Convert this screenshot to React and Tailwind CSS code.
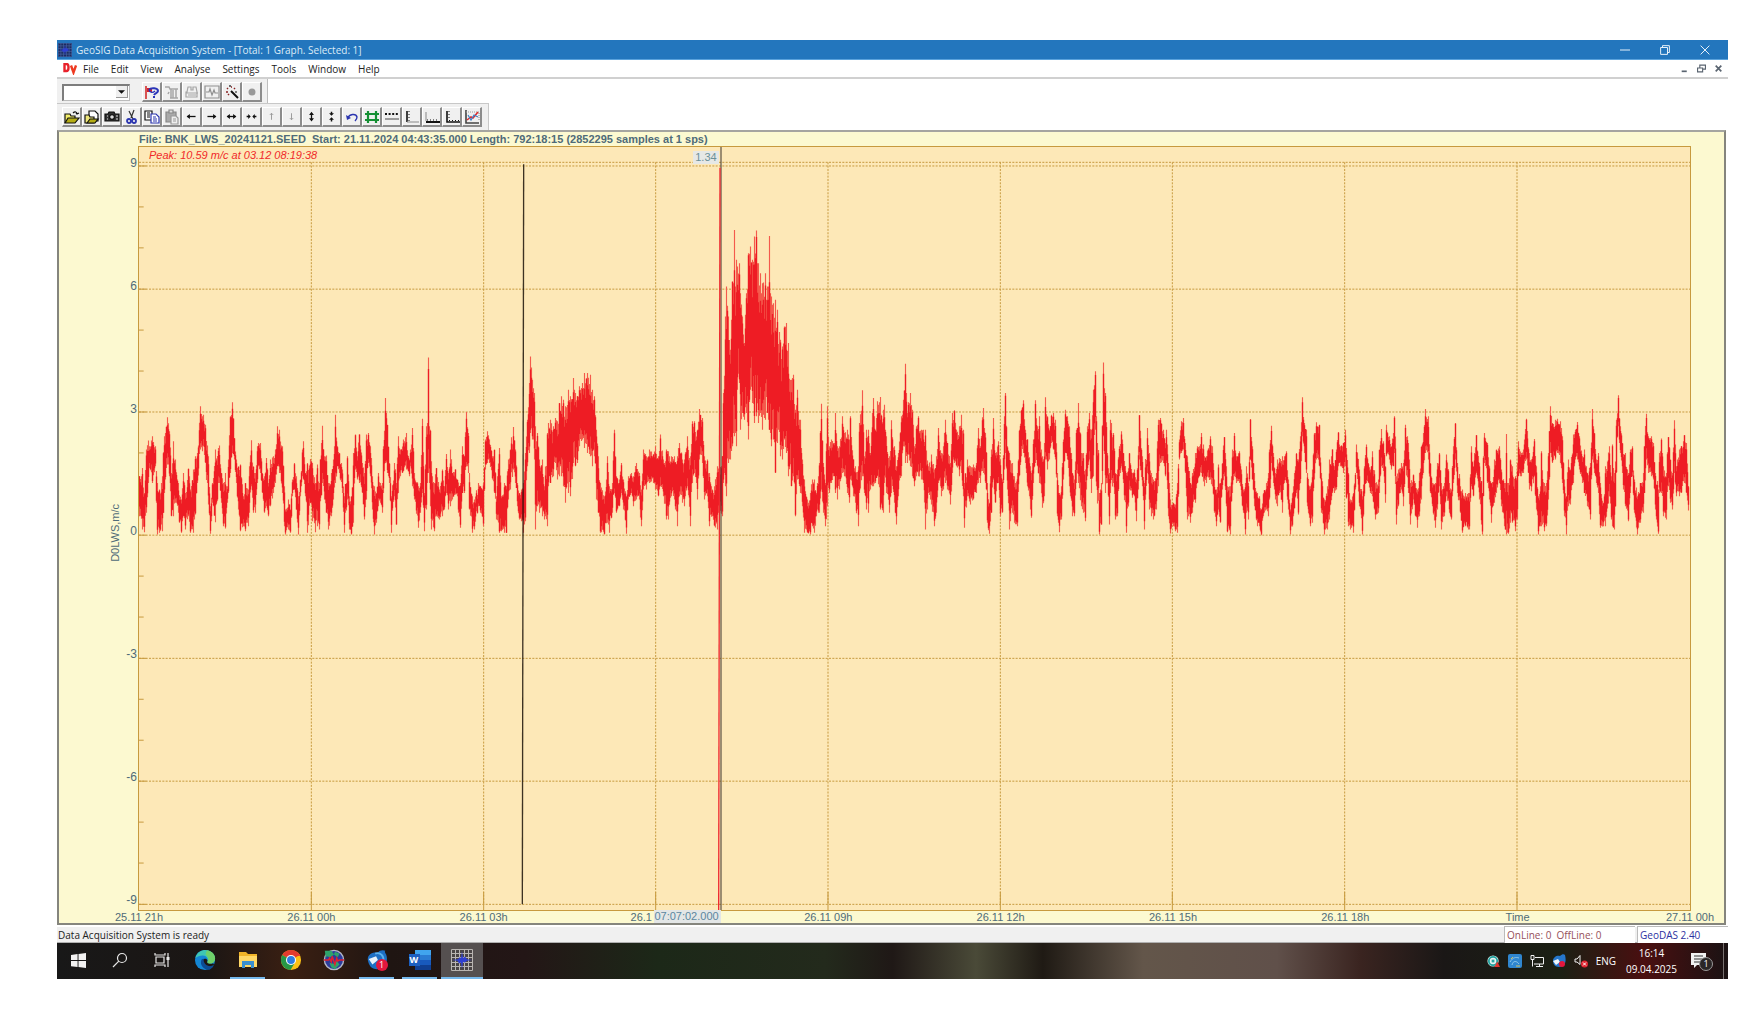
import React, { useState } from "react";

// Envelope of the recorded signal, written as "x top bottom" triples.
const sections = [
  {
    x: -28,
    y: 609,
    data: `28 380 500 38 355 540 45 430 548 50 300 490 55 273 400 60 290 355 68 260 400 76 290 350 82 400 555 90 420 550 98 380 545
103 260 430 112 203 345 118 245 380 124 370 500 131 275 500 136 330 460 145 400 490 155 450 550 160 370 500 168 430 540 175 357 500
183 420 550 190 360 550 197 320 495 204 310 400 212 170 300 217 200 305 222 195 290 228 225 340 235 320 465 241 470 553 247 400 460
252 385 470 257 300 518 265 295 400 270 288 400 276 370 460 280 400 530 286 370 537 292 410 460 297 330 430 302 200 370 308 158 310
315 265 330 320 330 400 327 350 480 333 345 545 340 440 530 347 400 545 355 420 530 359 350 490 364 272 410 370 350 490 377 370 490
382 290 400 387 280 350 392 280 370 398 370 430 404 380 490 409 325 470 415 400 500 422 330 470 430 320 430 437 300 400 444 230 350
450 240 370 457 290 430 463 410 530 468 480 555 475 450 540 483 480 550 487 390 440 493 340 420 500 380 480 507 440 555 513 390 440
519 300 380 522 275 390 527 370 440 532 340 550 542 328 460 549 340 515 556 400 548 562 345 530 570 400 540 577 228 400 583 320 450
590 318 490 597 400 540 604 370 500 611 330 450 617 195 400 623 290 350 630 310 370 637 360 430 645 440 550 653 320 450 660 440 540
666 440 555 672 310 520 677 255 360 683 320 390 690 255 400 697 340 430 705 370 510 711 255 450 716 250 340 722 290 380 727 380 480
734 410 555 741 430 520 747 370 470 753 400 460 757 400 490 761 290 430 767 145 340 772 225 370 778 340 400 785 440 550 793 340 440
800 400 525 806 260 430 812 300 380 820 270 365 829 250 360 838 330 380 843 300 350 848 235 410 855 370 450 865 410 535 871 400 490
877 207 430 883 430 545 889 230 480 892 220 400 895 23 370 898 230 400 902 240 470 906 335 540 914 400 545 921 355 500 930 420 510 937 360 500 943 410 480
949 313 430 956 370 480 962 300 470 968 370 450 978 360 435 984 390 440 991 400 535 998 290 430 1004 320 430 1010 187 350 1015 250 370
1020 370 480 1027 440 550 1035 450 540 1045 400 470 1052 410 490 1060 400 530 1066 270 360 1072 245 340 1079 270 340 1087 320 390
1094 300 430 1100 440 510 1109 295 550 1116 440 545 1123 400 550 1130 410 550 1136 330 450 1143 300 420 1151 232 360 1156 300 400
1162 400 470 1168 430 510 1175 420 515`,
  },
  {
    x: 1082,
    y: 159,
    data: `70 850 1000 77 760 965 82 660 800 88 550 760 93 470 700 98 540 720 103 580 780 108 680 990 114 700 920 120 780 940 127 780 950
134 860 960 142 700 980 147 670 860 153 660 850 160 680 830 167 655 790 173 665 840 180 610 830 186 590 830 192 600 860 198 620 910
205 570 880 212 590 890 220 535 790 227 580 800 234 590 790 240 560 740 247 550 720 254 520 745 262 520 760 271 525 770 277 570 800
284 590 770 290 690 900 295 770 940 303 850 1000 313 890 1005 322 770 970 330 860 1000 337 850 940 343 690 880 350 830 940 358 840 920
365 790 880 372 840 930 379 890 1003 386 830 900 395 820 880 402 830 920 410 790 900 418 820 900 424 870 980 430 750 870 440 770 870
450 750 850 460 765 850 467 740 870 475 770 890 482 705 860 490 780 890 500 750 960 507 755 960 515 770 890 524 770 900 534 770 980
540 730 890 547 780 910 555 780 920 563 710 860 571 770 980 578 665 850 585 665 820 592 690 900 600 628 780 609 655 790 615 770 900
622 780 890 630 820 980 638 870 950 645 860 980 652 800 990 660 800 940 668 770 950 671 580 850 676 350 860 681 260 890 687 350 790
692 450 780 698 245 740 701 250 700 704 90 710 707 260 700 709 180 740 714 200 570 718 190 550 723 280 690 729 350 640 734 430 660 740 280 640 746 160 720
751 140 570 758 180 610 764 110 670 771 92 650 777 190 670 782 220 640 789 250 690 797 220 660 803 260 640 806 260 660 809 108 690 812 280 700 815 290 740
821 310 720 827 300 820 834 330 730 841 420 770 848 440 780 855 380 720 860 370 760 867 430 830 874 540 860 882 525 830 887 630 950
894 570 840 902 660 880 908 780 920 915 840 1000 923 900 1000 931 880 1005 938 840 980 945 840 1000 951 880 950 958 790 940
965 612 870 971 790 940 976 850 980 983 620 920 990 740 880 996 720 850 1003 730 830 1007 640 880 1013 740 900 1020 740 870
1027 650 820 1035 700 830 1042 690 880 1050 720 910 1053 650 840 1060 780 890 1068 800 910 1075 800 980`,
  },
  {
    x: 2162,
    y: 609,
    data: `0 220 430 7 122 380 14 320 430 19 240 480 25 240 490 31 310 420 37 190 410 42 145 410 48 240 400 54 155 380 63 142 480
70 180 490 75 165 400 81 260 430 88 320 490 96 212 430 103 290 460 110 350 525 117 310 440 125 200 380 131 150 290 137 42 340
144 190 340 151 130 350 157 180 380 165 290 410 171 230 380 177 200 380 185 240 390 192 240 400 198 240 540 205 350 430 215 315 465
223 360 530 231 320 490 237 235 400 244 310 440 250 290 420 256 210 400 264 280 420 272 340 465 278 190 370 284 182 340 291 240 350
298 230 380 305 195 370 310 240 440 315 400 535 322 330 440 332 350 465 342 345 450 349 340 430 355 235 400 361 290 400 370 175 370
376 250 400 383 400 520 390 460 553 396 300 490 401 205 390 408 310 460 415 275 400 421 330 500 428 390 490 433 200 360 437 130 310
443 290 420 450 310 540 457 340 490 465 380 520 474 370 530 479 240 380 485 180 320 490 152 310 497 240 340 504 270 410 511 350 480
516 370 505 522 270 400 527 152 340 533 230 350 540 200 400 548 320 475 553 280 440 558 143 330 564 200 360 570 240 330 574 195 280
580 190 300 586 210 330 592 370 500 598 430 548 606 410 510 612 270 390 617 180 310 623 200 330 630 230 410 637 370 500 644 390 500
649 240 400 657 160 400 664 310 470 670 310 490 676 360 515 682 230 380 689 190 330 696 240 430 701 120 380 706 65 240 711 200 410
718 430 555 724 400 525 730 38 260 736 130 430 743 310 400 749 370 525 753 210 430 760 250 400 768 370 510 773 360 500 778 290 380
785 245 350 792 310 400 801 370 550 809 310 420 817 370 445 823 360 440 830 390 515 836 290 420 840 197 330 847 320 410 855 400 540
863 235 370 869 310 480 875 370 500 882 390 510 890 370 480 896 210 410 903 205 340 910 240 340 916 280 380 921 240 340 927 340 500
932 450 552 940 460 530 947 465 545 954 400 550 960 270 330 965 215 310 971 205 300 978 280 370 984 320 510 992 400 520 999 370 490
1006 310 460 1013 290 400 1020 290 380 1026 250 370 1034 320 410 1041 320 400 1051 260 390 1058 290 410 1063 390 490 1069 420 530
1075 345 480 1083 400 520 1088 340 420 1093 262 380 1099 350 470 1104 410 548 1111 410 555 1117 300 430 1123 250 380 1130 320 400
1138 305 400 1145 360 440 1151 420 490 1156 400 555 1161 350 490 1166 400 510 1172 208 330 1178 290 390 1185 370 470 1192 430 530
1200 440 530 1204 480 557 1212 430 500 1219 400 480 1226 370 500`,
  },
  {
    x: 3392,
    y: 609,
    data: `0 300 450 4 228 340 10 310 400 17 370 450 23 330 470 30 325 430 38 320 490 44 320 400 50 305 400 56 390 480 63 480 555
70 410 500 79 310 430 85 330 495 92 260 400 97 143 260 104 220 310 109 240 370 114 370 470 122 410 530 129 360 520 135 250 390
140 218 330 148 225 350 155 370 490 164 450 555 172 410 540 180 330 510 187 300 430 194 350 430 200 300 420 207 247 350 213 290 350
220 280 370 228 240 350 235 370 530 243 450 540 251 430 550 256 370 420 261 285 370 268 360 470 278 440 555 285 350 440 289 285 400
295 340 400 302 360 430 308 305 440 316 400 510 325 390 490 330 300 430 336 238 350 343 310 400 348 350 460 351 225 320 358 260 330
364 290 360 370 250 350 375 200 310 380 380 525 387 360 470 395 340 420 402 340 470 407 225 350 415 280 430 423 400 525 431 375 450
437 400 500 443 420 535 449 370 500 456 290 450 460 250 370 468 178 310 475 200 330 482 340 430 489 400 470 496 400 535 502 340 480
508 310 410 516 400 540 524 400 500 531 315 440 538 400 490 545 420 510 551 290 400 557 220 330 564 340 430 572 410 490 579 420 550
588 430 530 595 430 540 600 430 540 604 290 410 612 350 440 621 257 370 628 340 450 637 430 555 641 320 440 645 250 340 652 280 400
659 350 450 666 400 520 673 330 460 680 300 430 688 290 400 696 360 470 703 400 530 706 400 540 709 253 555 712 400 550 716 400 553 723 330 520 729 350 520
736 380 545 742 340 510 746 275 380 754 310 380 762 300 370 770 207 330 778 310 420 785 330 425 793 268 380 800 350 480 805 440 555
812 410 530 816 305 530 823 400 545 831 400 530 836 310 450 841 170 310 849 220 340 856 210 330 863 207 310 871 215 340 877 260 400
883 390 500 890 440 555 896 330 470 903 360 465 910 255 400 916 240 330 922 217 330 930 260 360 938 320 400 945 300 430 953 370 470
961 340 510 967 178 330 973 250 370 979 330 400 985 310 430 991 400 535 1000 460 530 1008 350 530 1018 290 440 1024 380 510
1029 285 530 1034 370 540 1040 210 370 1045 137 230 1052 230 310 1058 280 370 1067 310 470 1075 370 515 1081 300 430 1088 290 380
1095 390 490 1104 440 555 1112 400 520 1120 370 490 1125 290 430 1129 192 330 1136 260 370 1145 260 380 1152 280 390 1158 370 480
1165 420 553 1170 310 430 1175 267 430 1182 350 500 1189 370 510 1196 262 410 1203 330 460 1208 370 480 1215 212 370 1221 350 440
1228 300 440 1235 290 430 1244 257 400 1250 280 430 1257 400 500`,
  },
];

const buildTrace = () => {
  // every sample sits on the middle of a column that is 3 units wide
  const points = [];
  sections.forEach((s) => {
    const n = s.data.trim().split(/\s+/).map(Number);
    for (let i = 0; i < n.length; i += 3) {
      points.push([Math.floor((n[i] + s.x) / 3) * 3 + 1.5, n[i + 1] + s.y, n[i + 2] + s.y]);
    }
  });

  let seed = 7;
  const rand = () => {
    seed = (seed * 16807) % 2147483647;
    return seed / 2147483647;
  };

  let outer = "";
  let core = "";
  let k = 0;
  for (let x = 1.5; x < 4650; x += 3) {
    while (k < points.length - 2 && points[k + 1][0] <= x) k++;
    const [x0, t0, b0] = points[k];
    const [x1, t1, b1] = points[k + 1];
    let top = t0;
    let bottom = b0;
    if (x > x0) {
      const f = Math.min(1, (x - x0) / (x1 - x0));
      const ft = f * 0.6 + rand() * 0.4;
      const fb = f * 0.6 + rand() * 0.4;
      top = t0 + (t1 - t0) * ft;
      bottom = b0 + (b1 - b0) * fb;
      const h = bottom - top;
      top += h * 0.16 * rand();
      bottom -= h * 0.16 * rand();
    }
    const h = bottom - top;
    outer += `M${x} ${Math.round(top)}V${Math.round(bottom)}`;
    core += `M${x} ${Math.round(top + h * rand() * 0.26)}V${Math.round(bottom - h * rand() * 0.26)}`;
  }
  return { outer, core };
};

const trace = buildTrace();

const GRID_Y = [57, 427, 796, 1166, 1536, 1905, 2275];
const GRID_X = [517, 1034, 1550, 2067, 2584, 3100, 3617, 4134];

const Plot = () => (
  <svg
    viewBox="0 0 4653 2292"
    preserveAspectRatio="none"
    className="absolute inset-0 w-full h-full"
    role="img"
    aria-label="D0LWS,m/c"
  >
    <g stroke="#c79a3e" strokeWidth="3" fill="none">
      <g strokeDasharray="6 4">
        {[46, ...GRID_Y].map((y) => (
          <path key={y} d={`M0 ${y}H4653`} />
        ))}
        {GRID_X.map((x) => (
          <path key={x} d={`M${x} 46V2275`} />
        ))}
      </g>
      {GRID_Y.map((y) => (
        <path key={y} d={`M0 ${y}H22`} />
      ))}
      {GRID_Y.slice(0, 6).map((y) => (
        <path key={y} d={`M0 ${y + 123}H14M0 ${y + 246}H14`} />
      ))}
      {GRID_X.map((x) => (
        <path key={x} d={`M${x} 2238V2292`} />
      ))}
    </g>
    <path d={trace.outer} stroke="#f45a4c" strokeWidth="3.4" fill="none" />
    <path d={trace.core} stroke="#ee1c24" strokeWidth="4" fill="none" />
    <path d="M1154 52L1150 2275" stroke="#1b1208" strokeOpacity="0.85" strokeWidth="4" />
    <path d="M1746 0V2292" stroke="#3a332a" strokeWidth="3" />
    <path d="M1743 62L1739 2292" stroke="#ee2a30" strokeWidth="4" />
  </svg>
);

const Icon = ({ children, size = 16 }) => (
  <svg viewBox="0 0 16 16" width={size} height={size} fill="none" stroke="#111" strokeWidth="1.2" aria-hidden="true">
    {children}
  </svg>
);

const ToolButton = ({ label, children }) => (
  <button
    type="button"
    aria-label={label}
    className="w-5 h-5 flex items-center justify-center bg-[#f0f0f0] border-t border-l border-t-white border-l-white border-r-2 border-b-2 border-r-[#8c8c8c] border-b-[#8c8c8c]"
  >
    {children}
  </button>
);

const topTools = [
  ["Help", <><path d="M2 2v13" stroke="#c11" strokeWidth="1.4" /><path d="M3 4h5v4H3z" fill="#d8202a" stroke="none" /><path d="M5 6c2-3 9-2 9 1 0 2-3 2-4 4" stroke="#2a35b8" strokeWidth="2" /><path d="M5 6c1 3 4 3 6 1" stroke="#2a35b8" strokeWidth="1.4" /><path d="M9 13h2" stroke="#2a35b8" strokeWidth="2" /></>],
  ["Tools", <path d="M1 3h4l1 2h8M7 5v9M9 6v8M12 5v9M5 8l-1 2M6 14h8" stroke="#a5a5a5" strokeWidth="1.5" />],
  ["Device", <path d="M3 8l1-5h3v3h2V3h3l1 5v5H2V8zM2 9h12M4 11h8" stroke="#a5a5a5" />],
  ["Signal", <path d="M1 2h14v12H1zM2 8h3l1-3 2 6 2-5 1 3h3" stroke="#8f8f8f" />],
  ["Wizard", <><path d="M7 7l7 7" strokeWidth="2" /><path d="M7 3h1M3 4l1 1M2 8h2M10 5l1-1M5 10l-1 1" stroke="#822" strokeWidth="1.5" /><path d="M6 1v2M11 8h2" /></>],
  ["Record", <circle cx="8" cy="8" r="3.5" fill="#999" stroke="none" />],
];

const graphTools = [
  ["Open", <><path d="M1 14V5h5l1 2h4v2" fill="#f3ee6a" /><path d="M1 14l3-5h11l-4 5z" fill="#b5ad16" /><path d="M9 4c2-2 4-1 4 1m-1-1l1 1 2-1" /></>],
  ["Open copy", <><path d="M5 11V2h6l3 3v7H5" fill="#fff" /><path d="M1 14V6h4l1 2h4v6z" fill="#eee67a" /><path d="M3 14l3-4h8l-3 4z" fill="#b5ad16" /></>],
  ["Snapshot", <><path d="M1 5h3l1-2h5l1 2h4v7H1z" fill="#333" /><circle cx="8" cy="8" r="2.4" fill="#ddd" /><path d="M3 7h1M12 7h2M3 10h1M12 10h2" stroke="#ddd" /></>],
  ["Cut", <><path d="M10 1L7 9M5 2l4 8" stroke="#333" /><circle cx="5" cy="12" r="2" stroke="#2c36b0" strokeWidth="1.8" /><circle cx="10" cy="12" r="2" stroke="#2c36b0" strokeWidth="1.8" /></>],
  ["Copy", <><path d="M1 2h7v9H1zM3 4h3M3 6h3M3 8h3" fill="#fff" /><path d="M7 5h5l3 3v6H7z" fill="#fff" stroke="#2c36b0" /><path d="M9 8h3M9 10h4M9 12h4" stroke="#2c36b0" /></>],
  ["Paste", <><path d="M2 3h10v10H2z" fill="#aaa" stroke="#888" /><path d="M5 1h4v3H5z" fill="#ddd" stroke="#888" /><path d="M7 7h5l2 2v6H7zM9 10h3M9 12h3" fill="#eee" stroke="#999" /></>],
  ["Left", <path d="M3 8h10" strokeWidth="1.6" />, <path d="M2 8l4-3v6z" fill="#111" stroke="none" />],
  ["Right", <path d="M3 8h10" strokeWidth="1.6" />, <path d="M14 8l-4-3v6z" fill="#111" stroke="none" />],
  ["Expand time", <path d="M3 8h10" strokeWidth="1.6" />, <path d="M2 8l4-3v6zM14 8l-4-3v6z" fill="#111" stroke="none" />],
  ["Shrink time", <path d="M2 8h3M11 8h3" strokeWidth="1.8" />, <path d="M7 8L4 5v6zM9 8l3-3v6z" fill="#111" stroke="none" />],
  ["Up", <path d="M8 12V4M6 6l2-2 2 2" stroke="#9a9a9a" />, <></>],
  ["Down", <path d="M8 4v8M6 10l2 2 2-2" stroke="#9a9a9a" />, <></>],
  ["Expand scale", <path d="M8 4v8" strokeWidth="1.6" />, <path d="M8 2L5 6h6zM8 14l-3-4h6z" fill="#111" stroke="none" />],
  ["Shrink scale", <path d="M8 2v3M8 11v3" strokeWidth="1.8" />, <path d="M8 7L5 4h6zM8 9l-3 3h6z" fill="#111" stroke="none" />],
  ["Undo", <><path d="M4 9c1-4 8-5 9-1 0 2-1 3-2 4" stroke="#2c36b0" strokeWidth="1.4" /><path d="M2 6l1 5 4-2z" fill="#2c36b0" stroke="none" /></>],
  ["Grid", <path d="M4 2v12M12 2v12M1 5h14M1 11h14" stroke="#159034" strokeWidth="2.2" />],
  ["Lines", <><path d="M1 5h14" strokeWidth="2" strokeDasharray="2 1.6" /><path d="M1 10h14" stroke="#888" strokeWidth="1.6" /></>],
  ["Y axis", <><path d="M3 2v11" strokeWidth="1.6" /><path d="M3 13h12" stroke="#999" /><path d="M5 2v10" strokeWidth="1" strokeDasharray="1 2" /></>],
  ["X axis", <><path d="M2 3v9" stroke="#999" /><path d="M2 13h14" strokeWidth="2" /><path d="M3 11h12" strokeWidth="1" strokeDasharray="1 2" /></>],
  ["Both axes", <><path d="M3 2v11h13" strokeWidth="1.6" /><path d="M5 11.500h10M5 2v9" strokeWidth="1" strokeDasharray="1 2" /></>],
  ["Chart", <><path d="M2 1v13h13" strokeWidth="1.6" stroke="#444" /><path d="M2 3h13v9" stroke="#999" strokeDasharray="1 1" /><path d="M3 11l4-3 2 1 5-6" stroke="#e02a2a" strokeWidth="1.5" /><path d="M4 6l3 5 3-5 4 2" stroke="#3d7fc4" /></>],
];

const GridLogo = ({ size, line, back }) => (
  <svg viewBox="0 0 22 22" width={size} height={size} aria-hidden="true">
    <path d="M0 0h22v22H0z" fill={back} />
    <path d="M.5 .5h21v21H.5zM0 4.500h22M0 8.500h22M0 13.500h22M0 17.500h22M4.500 0v22M8.500 0v22M13.500 0v22M17.500 0v22" stroke={line} fill="none" />
    <path d="M1 11l6-.8 2-2.200 1 1.500L11 2l1 7 2-1.500 2 2.700 5 .8-5 .8-2 1.700-2-.5-1 7-1-6.500-2 1-1.500-2.700z" fill="#2f3fd0" />
  </svg>
);

const taskIcons = [
  { name: "Start", width: "w-[42px]", icon: <svg viewBox="0 0 16 16" width="15" height="15"><path d="M0 2l7-1v6.5H0zM8 1l8-1v7.500H8zM0 8.500h7V15l-7-1zM8 8.500h8V16l-8-1z" fill="#f2f2f2" /></svg> },
  { name: "Search", width: "w-[42px]", icon: <svg viewBox="0 0 16 16" width="16" height="16" fill="none" stroke="#e8e8e8" strokeWidth="1.2"><circle cx="10" cy="6" r="4.500" /><path d="M6.800 9.200L1 15" /></svg> },
  { name: "Task view", width: "w-[42px]", icon: <svg viewBox="0 0 16 16" width="16" height="16" fill="none" stroke="#e8e8e8" strokeWidth="1.200"><path d="M2 5h8v6H2zM1 1v2h10V1M1 15v-2h10v2M14 1v14" /><path d="M14 5v3" strokeWidth="3" /></svg> },
  {
    name: "Edge",
    icon: (
      <svg viewBox="0 0 24 24" width="22" height="22">
        <circle cx="12" cy="12" r="11" fill="#1486d4" />
        <path d="M1.500 10C3 3 9 1 12 1c7 0 11 5 11 9 0 4-3 6-6 6-2 0-3-1-2.500-2 2-3-1-7-5-7-3 0-6 1-8 3z" fill="#3fc6b4" />
        <path d="M14 1.300c6 1 9 5 9 9 0 4-3 5.700-6 5.700-2 0-3-1-2.500-2 2-2 1-6-2-8z" fill="#6fd06a" />
        <path d="M8 12c-2 6 3 11 9 10.500 2-1 4-3 5-5-5 3-11 0-11-5 0-1 0-2-1-2s-2 1-2 1.500z" fill="#0c4b94" />
        <path d="M10.500 12c0-2 3-2 4 0 .5 1-.5 2 0 3 1 1.500 5 1.300 6.500.5l1 2c-5 3-11.500 0-11.500-5.500z" fill="#1b1614" />
      </svg>
    ),
  },
  {
    name: "Explorer",
    open: true,
    icon: (
      <svg viewBox="0 0 20 18" width="20" height="18">
        <path d="M1 1h7l2 2h9v13H1z" fill="#f0b429" />
        <path d="M1 5h18v11H1z" fill="#ffd867" />
        <path d="M4 17v-7h12v7h-3v-3H7v3z" fill="#3a8fd0" />
      </svg>
    ),
  },
  {
    name: "Chrome",
    icon: (
      <svg viewBox="0 0 24 24" width="22" height="22">
        <circle cx="12" cy="12" r="11" fill="#fbc116" />
        <path d="M12 12L2.500 6.500A11 11 0 0 1 21.500 6.500z" fill="#e33b2e" />
        <path d="M2.500 6.500A11 11 0 0 0 11.500 23l5-8.500L12 12z" fill="#279847" />
        <path d="M12 6.500h9.800" stroke="#e33b2e" strokeWidth="2" />
        <circle cx="12" cy="12" r="5.500" fill="#fff" />
        <circle cx="12" cy="12" r="4.300" fill="#2f7de1" />
      </svg>
    ),
  },
  {
    name: "Seismic monitor",
    icon: (
      <svg viewBox="0 0 24 24" width="22" height="22">
        <circle cx="12" cy="12" r="10.500" fill="#2c3c9c" stroke="#b4b8c8" strokeWidth="1.500" />
        <path d="M2 2h7l3 4-4 3-4-1-1 2zM13 3l5 2-2 4-4-3zM7 15l5 1 3-3 3 4-5 5-4-2z" fill="#2fa36b" />
        <path d="M1 12h5l1-2 2 4 1-6 3 9 2-7 1 3 2-1h5" stroke="#e02030" strokeWidth="1.600" fill="none" />
      </svg>
    ),
  },
  {
    name: "Thunderbird",
    open: true,
    icon: (
      <span className="relative">
        <svg viewBox="0 0 24 24" width="22" height="22">
          <path d="M2 12C1 5 9 3 13 4c2-3 6-3 8-2-1 1 0 2 1 4 3 8-2 16-10 16C6 22 3 18 2 12z" fill="#1d6fc4" />
          <path d="M3 11l8-3 2 4-6 5z" fill="#e8f2fb" />
          <path d="M10 5c6-2 10 3 9 9" stroke="#5bb2ee" strokeWidth="2" fill="none" />
        </svg>
        <span className="absolute left-2.5 top-2.5 w-3 h-3 rounded-full bg-[#e3173e] text-white text-[9px] leading-3 text-center">1</span>
      </span>
    ),
  },
  {
    name: "Word",
    open: true,
    icon: (
      <span className="relative">
        <svg viewBox="0 0 22 20" width="22" height="20">
          <path d="M6 0h16v5H6z" fill="#41a5ee" />
          <path d="M6 5h16v5H6z" fill="#2b7cd3" />
          <path d="M6 10h16v5H6z" fill="#185abd" />
          <path d="M6 15h16v5H6z" fill="#103f91" />
          <path d="M0 4h11v12H0z" fill="#1c5fc0" />
        </svg>
        <span className="absolute left-px top-1 text-white text-[9px] leading-3 font-bold">W</span>
      </span>
    ),
  },
  { name: "GeoDAS", width: "w-[42px]", open: true, active: true, icon: <GridLogo size={22} line="#b9b5b2" back="#4a4545" /> },
];

const TaskBar = () => (
  <footer className="h-9 flex items-stretch text-white bg-[linear-gradient(90deg,#181818_0%,#1b1614_9%,#3a1f12_14%,#1f1512_20%,#231616_28%,#1c2818_36%,#232a1c_46%,#1f1816_50%,#4a4a38_55%,#1f1a14_59%,#63564a_65%,#60504a_73%,#3a2420_78%,#1a1716_83%,#1c2014_90%,#4a0f10_95%,#1a1213_100%)]">
    {taskIcons.map((t) => (
      <button
        key={t.name}
        type="button"
        aria-label={t.name}
        className={`${t.width || "w-[43px]"} px-1 flex flex-col items-stretch ${t.active ? "bg-[#555050]" : ""}`}
      >
        <span className="flex-1 flex items-center justify-center">{t.icon}</span>
        <span className={`h-0.5 ${t.active ? "-mx-1" : ""} ${t.open ? "bg-[#76b9ed]" : ""}`} />
      </button>
    ))}
    <div className="ml-auto flex items-center gap-2 font-['Open_Sans',sans-serif] text-[10px] leading-4">
      <svg viewBox="0 0 14 14" width="13" height="13">
        <circle cx="6.500" cy="6.500" r="6" fill="#e9f4f3" />
        <circle cx="6.500" cy="6.500" r="4.500" fill="none" stroke="#25a4a0" strokeWidth="2" />
        <path d="M5 5h3v3H5z" fill="#25a4a0" />
        <path d="M11 7l3 6H8z" fill="#e0342c" />
      </svg>
      <svg viewBox="0 0 14 14" width="14" height="14">
        <rect width="14" height="14" rx="2" fill="#2f86cf" />
        <path d="M2 8c3-5 6-5 9-4M4 11c1-5 5-4 7-1" stroke="#8cc6ea" fill="none" />
        <path d="M3 5l2-2M8 12h4" stroke="#d7c15b" />
      </svg>
      <svg viewBox="0 0 14 12" width="14" height="12" fill="none" stroke="#f2f2f2">
        <path d="M5 2.500h8.500v6.500H4M6 11.500h7M9.500 9v2M1 .5h3v4H1zM2.500 5v6.500" />
      </svg>
      <svg viewBox="0 0 14 14" width="14" height="14">
        <path d="M1 7C1 3 5 1 8 2c2-2 4-2 5-1 2 8-1 12-6 12-4 0-6-3-6-6z" fill="#2577cc" />
        <path d="M1 7l5-2 2 3-4 3z" fill="#eef5fb" />
        <circle cx="10" cy="10" r="3" fill="#e3173e" />
      </svg>
      <svg viewBox="0 0 14 14" width="14" height="14">
        <path d="M1 5h2l3-3.500v9L3 8H1z" fill="none" stroke="#f2f2f2" />
        <circle cx="10.500" cy="10" r="3.500" fill="#e0242f" />
        <path d="M9 8.500l3 3m0-3l-3 3" stroke="#fff" />
      </svg>
      <span>ENG</span>
      <span className="ml-0.5 text-center">
        16:14
        <br />
        09.04.2025
      </span>
      <span className="relative ml-1.5 w-6 h-6">
        <svg viewBox="0 0 15 16" width="15" height="16" className="mt-1">
          <path d="M0 0h15v12H6l-3 3v-3H0z" fill="#f2f2f2" />
          <path d="M3 3h9M3 6h9M3 9h6" stroke="#333" />
        </svg>
        <span className="absolute left-2 top-2 w-[14px] h-[14px] rounded-full bg-[#2a2626] border border-[#9a9a9a] text-[9px] leading-3 text-center">1</span>
      </span>
      <span className="w-px self-stretch bg-[#77706f] mr-1" />
    </div>
  </footer>
);

const menus = ["File", "Edit", "View", "Analyse", "Settings", "Tools", "Window", "Help"];
const yLabels = ["9", "6", "3", "0", "-3", "-6", "-9"];
// The fourth label is cut short by the cursor time box.
const xLabels = ["25.11 21h", "26.11 00h", "26.11 03h", "26.1", "26.11 09h", "26.11 12h", "26.11 15h", "26.11 18h", "Time", "27.11 00h"];

const App = () => {
  const [channel, setChannel] = useState("");

  return (
    <div className="min-h-screen bg-white pt-10 pb-9 pl-[57px] pr-9 flex flex-col font-['Open_Sans',sans-serif] text-[10px] leading-4">
      <header className="h-5 flex items-center bg-[#2376bd] border-b border-[#5ba3dd] text-[#dcebf7] pl-px">
        <GridLogo size={14} line="#4a68a8" back="#1b2a5c" />
        <h1 className="ml-1">GeoSIG Data Acquisition System - [Total: 1 Graph. Selected: 1]</h1>
        <div className="ml-auto flex items-center gap-[30px] pr-[18px]">
          <button type="button" aria-label="Minimize"><Icon size={10}><path d="M0 8h16" stroke="#e6f0f9" strokeWidth="1.600" /></Icon></button>
          <button type="button" aria-label="Restore"><Icon size={10}><path d="M1 4h11v11H1zM4 4V1h11v11h-3" stroke="#e6f0f9" strokeWidth="1.600" /></Icon></button>
          <button type="button" aria-label="Close"><Icon size={10}><path d="M1 1l14 14M15 1L1 15" stroke="#e6f0f9" strokeWidth="1.600" /></Icon></button>
        </div>
      </header>

      <nav className="h-[19px] flex items-center border-b-2 border-[#d0d0d0] text-[#222] pl-1.5">
        <svg viewBox="0 0 14 12" width="14" height="12" fill="none" strokeWidth="2.400" className="mr-1.5" aria-hidden="true">
          <path d="M1.500 1v7h2q2 0 2-3.500T3.500 1z" stroke="#e8222c" />
          <path d="M8 2.500l2.500 7 2.500-7" stroke="#ee3a21" />
        </svg>
        <ul className="flex gap-3">
          {menus.map((m) => (
            <li key={m}><button type="button">{m}</button></li>
          ))}
        </ul>
        <div className="ml-auto flex items-center gap-2 pr-[5px]">
          <button type="button" aria-label="Minimize graph"><Icon size={9}><path d="M3 13h9" stroke="#5a6470" strokeWidth="3" /></Icon></button>
          <button type="button" aria-label="Restore graph"><Icon size={9}><path d="M1 7h9v7H1zM5 6V2h10v7h-4" stroke="#5a6470" strokeWidth="2" /></Icon></button>
          <button type="button" aria-label="Close graph"><Icon size={9}><path d="M3 3l10 10M13 3L3 13" stroke="#5a6470" strokeWidth="3" /></Icon></button>
        </div>
      </nav>

      <div className="self-start w-[211px] h-6 flex items-center bg-[#f0f0f0] border-r border-[#bdbdbd] pl-[5px] pt-0.5">
        <select
          aria-label="Channel"
          value={channel}
          onChange={(e) => setChannel(e.target.value)}
          className="appearance-none w-[68px] h-[17px] bg-white border-t-2 border-l-2 border-t-[#7d7d7d] border-l-[#7d7d7d] border-r border-b border-r-[#bbb] border-b-[#bbb]"
        >
          <option value=""></option>
        </select>
        <span className="-ml-3.5 w-3 h-3 flex items-center justify-center bg-[#f0f0f0] border-r border-b border-[#999] pointer-events-none">
          <svg viewBox="0 0 8 4" width="7" height="4"><path d="M0 0h8L4 4z" fill="#111" /></svg>
        </span>
        <div className="ml-[14px] flex">
          {topTools.map(([label, art]) => (
            <ToolButton key={label} label={label}><Icon>{art}</Icon></ToolButton>
          ))}
        </div>
      </div>

      <div className="self-start h-[27px] flex items-center bg-[#f0f0f0] border-t border-r border-[#c8c8c8] pl-[5px] pr-1.5">
        {graphTools.map(([label, art, heads]) => (
          <ToolButton key={label} label={label}>
            <Icon size={heads ? 13 : 16}>{art}{heads}</Icon>
          </ToolButton>
        ))}
      </div>

      <main className="mr-0.5 relative flex-1 flex flex-col bg-[#fcf9d0] border-2 border-[#85857d] border-t-[#a5a5a0] font-['Liberation_Sans',Arial,sans-serif] text-[#4f6b78]">
        <h2 className="h-[15px] pl-20 text-[11px] leading-[15px] font-bold whitespace-pre">
          File: BNK_LWS_20241121.SEED  Start: 21.11.2024 04:43:35.000 Length: 792:18:15 (2852295 samples at 1 sps)
        </h2>
        <div className="flex-1 flex">
          <div className="w-20 flex justify-end">
            <div className="flex items-center pt-2">
              <span className="[writing-mode:vertical-rl] rotate-180 text-[11px] leading-4">D0LWS,m/c</span>
            </div>
            <div className="w-4 flex flex-col justify-between items-end pr-0.5 pt-4 pb-2.5 text-xs">
              {yLabels.map((l) => (
                <span key={l} className="h-0 flex items-center">{l}</span>
              ))}
            </div>
          </div>
          <div className="relative flex-1 bg-[#fde8b7] outline outline-[#c79a3e]">
            <Plot />
            <p className="absolute left-2.5 top-0 text-[11px] leading-4 italic text-[#f02a2a]">Peak: 10.59 m/c at 03.12 08:19:38</p>
            <div className="absolute top-1 right-[62.500%] flex">
              <span className="px-0.5 mr-0.5 bg-[#e6e8e6] text-[11px] leading-[13px] text-[#6b9098]">1.34</span>
            </div>
            <div className="absolute top-full right-[62.500%] flex z-10">
              <span className="pr-0.5 bg-[#e3e6e6] text-[11px] leading-[13px] text-[#5b87a0]">07:07:02.000</span>
            </div>
          </div>
          <div className="w-[34px]" />
        </div>
        <div className="h-[13px] pl-20 pr-[34px] flex justify-between text-[11px] leading-[14px]">
          {xLabels.map((l) => (
            <span key={l} className={`w-0 flex whitespace-nowrap ${l === "26.1" ? "justify-end" : "justify-center"}`}>
              <span className={l === "26.1" ? "mr-1" : ""}>{l}</span>
            </span>
          ))}
        </div>
      </main>

      <div className="h-[18px] flex items-center bg-[#f0f0f0] border-t-2 border-b border-t-white border-b-[#b0b0b0] pl-px text-[#222]">
        <span>Data Acquisition System is ready</span>
        <span className="ml-auto w-[131px] pl-0.5 bg-white border-l border-t border-[#bbb] text-[#96505a]">OnLine: 0&nbsp; OffLine: 0</span>
        <span className="ml-0.5 w-[91px] pl-0.5 bg-white border-l border-t border-[#bbb] text-[#2c2fa0]">GeoDAS 2.40</span>
      </div>

      <TaskBar />
    </div>
  );
};

export default App;
